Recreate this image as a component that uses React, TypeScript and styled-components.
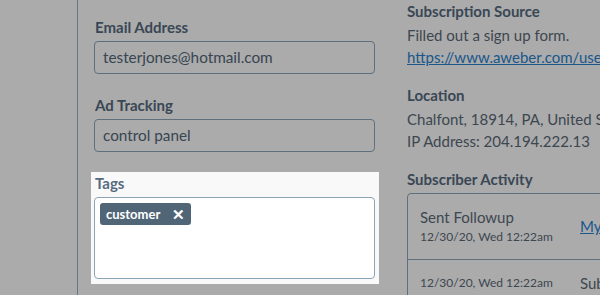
import React from 'react';
import styled, { createGlobalStyle } from 'styled-components';

// --- Global ---
const GlobalStyle = createGlobalStyle`
  html, body {
    margin: 0;
    padding: 0;
    background: #ffffff;
    overflow: hidden;
  }
  body {
    font-family: Lato, "Open Sans", sans-serif;
    color: #586d82;
  }
`;

// --- Layout ---
const Page = styled.div`
  display: flex;
  width: 900px;
  height: 295px;
`;

const Sidebar = styled.aside`
  width: 77px;
  flex-shrink: 0;
  border-right: 1px solid #9ab1c3;
`;

const Main = styled.main`
  display: flex;
  gap: 32px;
  padding-left: 16px;
`;

const FormColumn = styled.div`
  width: 281px;
  display: flex;
  flex-direction: column;
  padding-top: 16px;
`;

const InfoColumn = styled.div`
  width: 420px;
  display: flex;
  flex-direction: column;
`;

// --- Form ---
const Field = styled.div<{ $highlight?: boolean }>`
  display: flex;
  flex-direction: column;
  gap: 3px;
  margin-bottom: 20px;
  ${p => p.$highlight && `
    position: relative;
    z-index: 20;
    background: #f9f9f9;
    margin: 0 -4px 0 -3px;
    padding: 0 4px 5px 3px;
  `}
`;

const Label = styled.label`
  font-size: 15px;
  line-height: 22px;
  font-weight: 700;
  padding-left: 1px;
  color: #566b80;
`;

const Input = styled.div`
  box-sizing: border-box;
  height: 33px;
  border: 1px solid #8ea7ba;
  border-radius: 4px;
  padding: 0 8px;
  font-size: 15.3px;
  line-height: 31px;
  color: #54687b;
  background: #ffffff;
`;

const TagBox = styled.div`
  box-sizing: border-box;
  height: 82px;
  border: 1px solid #8ba4b6;
  border-radius: 4px;
  padding: 5px;
  background: #ffffff;
  display: flex;
  align-items: flex-start;
  gap: 4px;
`;

const Tag = styled.span`
  display: inline-flex;
  align-items: center;
  gap: 12px;
  height: 22px;
  padding: 0 6px;
  border-radius: 3px;
  background: #506677;
  color: #ffffff;
  font-size: 13px;
  font-weight: 700;
`;

const Remove = styled.span`
  font-size: 15px;
  line-height: 1;
`;

// --- Info ---
const Section = styled.section`
  display: flex;
  flex-direction: column;
  margin-bottom: 16px;
`;

const SectionTitle = styled.h4`
  margin: 0 0 2px;
  font-size: 15px;
  line-height: 22px;
  font-weight: 700;
  color: #566b80;
`;

const Line = styled.div`
  font-size: 15px;
  line-height: 22px;
  color: #5c6a78;
  white-space: nowrap;
`;

const Link = styled.a`
  color: #2a82d0;
  text-decoration: underline;
  white-space: nowrap;
`;

const ActivityBox = styled.div`
  border: 1px solid #8ea7ba;
  border-radius: 4px;
  margin-top: 1px;
`;

const ActivityRow = styled.div`
  display: grid;
  grid-template-columns: 160px 1fr;
  align-items: center;
  padding: 12px 12px 13px;
  & + & {
    border-top: 1px solid #8ea7ba;
  }
`;

const ActivityTitle = styled.div`
  font-size: 15px;
  line-height: 22px;
  color: #5c6a78;
`;

const ActivityDate = styled.div`
  font-size: 12px;
  line-height: 18px;
  color: #5c6a78;
`;

const ActivityDetail = styled.div`
  font-size: 15px;
  line-height: 22px;
  color: #5c6a78;
  white-space: nowrap;
`;

// --- Dim overlay behind the highlighted field ---
const Overlay = styled.div`
  position: fixed;
  inset: 0;
  background: rgba(0, 0, 0, 0.33);
  z-index: 10;
`;

const activity = [
  { title: 'Sent Followup', date: '12/30/20, Wed 12:22am', detail: <Link href="#">My Followup Series</Link> },
  { title: '', date: '12/30/20, Wed 12:22am', detail: 'Subscribed' },
];

export default function App() {
  return (
    <>
      <GlobalStyle />
      <Page>
        <Sidebar />
        <Main>
          <FormColumn>
            <Field>
              <Label>Email Address</Label>
              <Input>testerjones@hotmail.com</Input>
            </Field>
            <Field>
              <Label>Ad Tracking</Label>
              <Input>control panel</Input>
            </Field>
            <Field $highlight>
              <Label>Tags</Label>
              <TagBox>
                <Tag>
                  customer
                  <Remove>✕</Remove>
                </Tag>
              </TagBox>
            </Field>
          </FormColumn>

          <InfoColumn>
            <Section>
              <SectionTitle>Subscription Source</SectionTitle>
              <Line>Filled out a sign up form.</Line>
              <Line><Link href="#">https://www.aweber.com/users/signup</Link></Line>
            </Section>
            <Section>
              <SectionTitle>Location</SectionTitle>
              <Line>Chalfont, 18914, PA, United States</Line>
              <Line>IP Address: 204.194.222.13</Line>
            </Section>
            <Section>
              <SectionTitle>Subscriber Activity</SectionTitle>
              <ActivityBox>
                {activity.map((a, i) => (
                  <ActivityRow key={i}>
                    <div>
                      {a.title && <ActivityTitle>{a.title}</ActivityTitle>}
                      <ActivityDate>{a.date}</ActivityDate>
                    </div>
                    <ActivityDetail>{a.detail}</ActivityDetail>
                  </ActivityRow>
                ))}
              </ActivityBox>
            </Section>
          </InfoColumn>
        </Main>
      </Page>
      <Overlay />
    </>
  );
}
